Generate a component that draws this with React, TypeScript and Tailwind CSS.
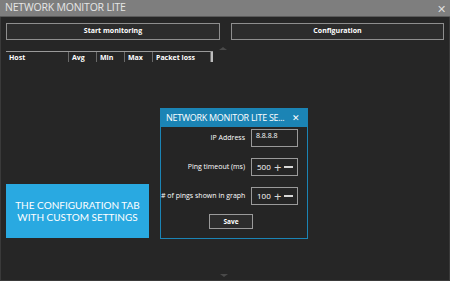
import React from "react";

const COLUMNS = [
  { name: "Host", w: "w-[63px]" },
  { name: "Avg", w: "w-[28px]" },
  { name: "Min", w: "w-[28px]" },
  { name: "Max", w: "w-[28px]" },
  { name: "Packet loss", w: "w-[58px]" },
];

const SETTINGS = [
  { label: "IP Address", value: "8.8.8.8", stepper: false },
  { label: "Ping timeout (ms)", value: "500", stepper: true },
  { label: "# of pings shown in graph", value: "100", stepper: true },
];

const Stepper = ({ value }: { value: string }) => (
  <div className="flex h-[18px] w-[47px] items-center border border-[#9a9a9a] pl-[5px] text-[8px] text-white">
    <span className="w-[15px]">{value}</span>
    <span className="ml-[2px] text-[13px] leading-none text-[#d8d8d8]">+</span>
    <span className="ml-[3px] h-[1.5px] w-[9px] bg-[#d8d8d8]" />
  </div>
);

export default function App() {
  return (
    <div
      className="relative flex h-[281px] w-[450px] flex-col overflow-hidden bg-[#262626]"
      style={{ fontFamily: '"Open Sans", "Noto Sans", sans-serif' }}
    >
      {/* title bar */}
      <div className="flex h-[17px] items-center justify-between border-b border-[#5a5a5a] bg-[#7e7e7e] pl-[5px] pr-[4px]">
        <span className="text-[10.5px] tracking-[-0.2px] text-[#e6e6e6]">NETWORK MONITOR LITE</span>
        <span className="text-[11px] leading-none text-[#dcdcdc]">✕</span>
      </div>

      <div className="flex flex-1 flex-col border-x border-b border-[#3a3a3a] px-[5px] pt-[6px]">
        <div className="flex gap-[11px]">
          <button className="h-[17px] w-[214px] border border-[#8e8e8e] bg-[#2c2c2c] text-[7px] font-bold text-white">
            Start monitoring
          </button>
          <button className="h-[17px] w-[213px] border border-[#8e8e8e] bg-[#2c2c2c] text-[7px] font-bold text-white">
            Configuration
          </button>
        </div>

        <div className="mt-[11px] flex">
          <div className="flex h-[11px] border-t border-[#9a9a9a]">
            {COLUMNS.map((c) => (
              <div
                key={c.name}
                className={`${c.w} border-r border-[#6a6a6a] pl-[3px] text-[7px] font-bold leading-[11px] text-white`}
              >
                {c.name}
              </div>
            ))}
            <div className="w-[2px] bg-[#bdbdbd]" />
          </div>
          <div className="ml-[6px] mt-[-4px] h-0 w-0 border-x-[4px] border-b-[3px] border-x-transparent border-b-[#4a4a4a]" />
        </div>

        <div className="flex-1" />
        <div className="mb-[3px] ml-[214px] h-0 w-0 border-x-[4px] border-t-[3px] border-x-transparent border-t-[#4a4a4a]" />
      </div>

      {/* callout */}
      <div className="absolute left-[6px] top-[184px] flex h-[54px] w-[143px] items-center justify-center bg-[#29a9e1]">
        <p className="whitespace-nowrap text-center font-['Lato',sans-serif] text-[10px] leading-[12px] text-white">
          THE CONFIGURATION TAB
          <br />
          WITH CUSTOM SETTINGS
        </p>
      </div>

      {/* settings dialog */}
      <div className="absolute left-[160px] top-[108px] flex h-[131px] w-[148px] flex-col border border-[#1b84b5] bg-[#252525]">
        <div className="flex h-[18px] items-center justify-between bg-[#1b84b5] pl-[5px] pr-[7px]">
          <span className="whitespace-nowrap text-[9px] tracking-[-0.3px] text-white">NETWORK MONITOR LITE SE...</span>
          <span className="text-[9px] text-white">✕</span>
        </div>
        <div className="flex flex-col gap-[11px] pt-[2px]">
          {SETTINGS.map((s) => (
            <div key={s.label} className="flex items-center">
              <span className="w-[84px] whitespace-nowrap text-right text-[7px] text-white">{s.label}</span>
              <div className="ml-[6px]">
                {s.stepper ? (
                  <Stepper value={s.value} />
                ) : (
                  <div className="h-[18px] w-[47px] border border-[#9a9a9a] pl-[4px] text-[7px] leading-[12px] text-white">
                    {s.value}
                  </div>
                )}
              </div>
            </div>
          ))}
        </div>
        <div className="mt-[9px] flex justify-center">
          <button className="ml-[-6px] h-[15px] w-[44px] border border-[#9a9a9a] bg-[#2c2c2c] text-[6.5px] font-bold text-white">
            Save
          </button>
        </div>
      </div>
    </div>
  );
}
